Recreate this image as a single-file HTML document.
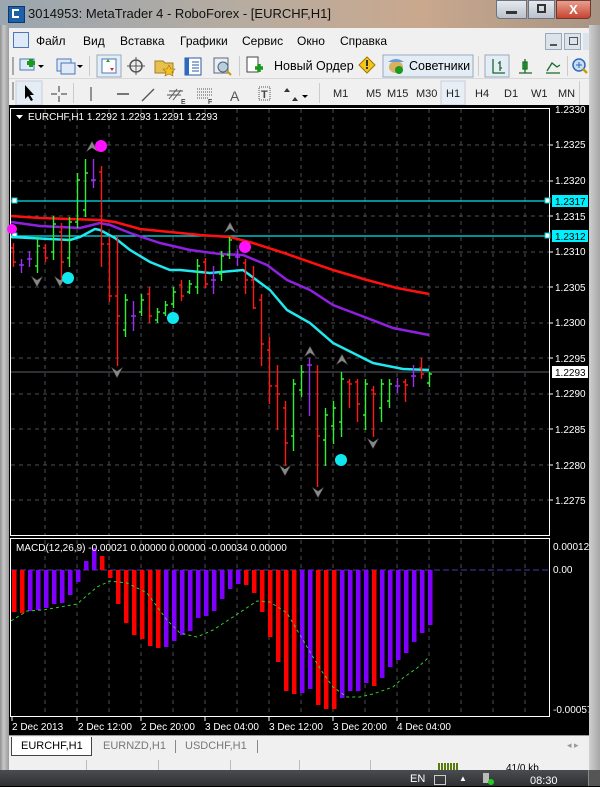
<!DOCTYPE html>
<html><head><meta charset="utf-8"><style>
*{margin:0;padding:0}
body{width:600px;height:786px;overflow:hidden;background:#000;font-family:"Liberation Sans","DejaVu Sans",sans-serif;position:relative}
.a{position:absolute}
.t{font-size:12px;color:#000;white-space:nowrap}
</style></head><body>
<!-- title bar -->
<div class="a" style="left:0;top:0;width:600px;height:28px;background:linear-gradient(90deg,#9aa6b0 0%,#b6aca0 40%,#c9a88e 70%,#a89484 100%)"></div>
<div class="a" style="left:8px;top:6px;width:15px;height:15px;background:#1d5fa8;border:1px solid #0c3a70"></div>
<div class="a" style="left:12px;top:9px;width:7px;height:9px;border:2px solid #fff;border-right:none;box-sizing:border-box"></div>
<div class="a t" style="left:28px;top:6px;font-size:13px;color:#111">3014953: MetaTrader 4 - RoboForex - [EURCHF,H1]</div>
<div class="a" style="left:496px;top:0;width:31px;height:19px;background:linear-gradient(#e6e9ee,#b9c1cc);border:1px solid #6b7380;border-radius:0 0 0 4px;box-sizing:border-box"></div>
<div class="a" style="left:506px;top:11px;width:11px;height:3px;background:#333"></div>
<div class="a" style="left:528px;top:0;width:27px;height:19px;background:linear-gradient(#e6e9ee,#b9c1cc);border:1px solid #6b7380;box-sizing:border-box"></div>
<div class="a" style="left:537px;top:4px;width:9px;height:9px;border:2px solid #333;box-sizing:border-box"></div>
<div class="a" style="left:556px;top:0;width:35px;height:19px;background:linear-gradient(#e8a090,#c74430);border:1px solid #6b3a30;border-radius:0 0 4px 0;color:#fff;font-size:13px;font-weight:bold;text-align:center;line-height:17px;box-sizing:border-box">X</div>
<!-- frame -->
<div class="a" style="left:0;top:25px;width:9px;height:745px;background:linear-gradient(90deg,#8f8f8f,#c8c8c8 40%,#9a9a9a)"></div>
<div class="a" style="left:589px;top:25px;width:11px;height:745px;background:linear-gradient(90deg,#d0d0d0,#a6a6a6)"></div>
<!-- menu -->
<div class="a" style="left:9px;top:28px;width:580px;height:25px;background:#f0f0f0"></div>
<div class="a" style="left:13px;top:32px;width:14px;height:14px;border:1px solid #4a78b8;background:#dfe9f7"></div>
<div class="a t" style="left:36px;top:34px">Файл</div>
<div class="a t" style="left:83px;top:34px">Вид</div>
<div class="a t" style="left:120px;top:34px">Вставка</div>
<div class="a t" style="left:180px;top:34px">Графики</div>
<div class="a t" style="left:242px;top:34px">Сервис</div>
<div class="a t" style="left:297px;top:34px">Окно</div>
<div class="a t" style="left:340px;top:34px">Справка</div>
<div class="a" style="left:545px;top:33px;width:17px;height:17px;background:#dde3ea;border:1px solid #9ab;box-sizing:border-box"></div>
<div class="a" style="left:550px;top:44px;width:7px;height:2px;background:#555"></div>
<div class="a" style="left:564px;top:33px;width:17px;height:17px;background:#dde3ea;border:1px solid #9ab;box-sizing:border-box"></div>
<div class="a" style="left:569px;top:37px;width:7px;height:6px;border:1px solid #555"></div>
<div class="a" style="left:583px;top:33px;width:6px;height:17px;background:#dde3ea"></div>
<!-- toolbars -->
<div class="a" style="left:9px;top:53px;width:580px;height:52px;background:#f0f0f0"></div>
<div class="a" style="left:9px;top:78px;width:580px;height:1px;background:#d8d8d8"></div>
<svg class="a" style="left:9px;top:53px" width="580" height="54">
<g fill="#aaa"><rect x="3" y="4" width="2" height="18"/><rect x="3" y="29" width="2" height="18"/></g>
<rect x="11" y="6" width="14" height="11" fill="#dfe9f7" stroke="#4a78b8"/><path d="M18 10h8M22 6v8" stroke="#1a9a1a" stroke-width="4"/><path d="M29 12l3 3 3-3z" fill="#000"/>
<rect x="48" y="6" width="14" height="12" fill="#dfe9f7" stroke="#4a78b8"/><rect x="52" y="10" width="14" height="11" fill="#dfe9f7" stroke="#4a78b8"/><path d="M68 12l3 3 3-3z" fill="#000"/>
<rect x="80" y="3" width="1" height="20" fill="#ccc"/>
<rect x="88" y="2" width="24" height="22" fill="#e4ecf5" stroke="#9ab"/><rect x="93" y="6" width="14" height="14" fill="#fff" stroke="#4a78b8"/><path d="M97 9l2-3 2 3z" fill="#2a2"/><path d="M101 15l2 3 2-3z" fill="#d22"/>
<circle cx="127" cy="13" r="6" fill="none" stroke="#555" stroke-width="1.5"/><path d="M127 4v18M118 13h18" stroke="#555"/>
<path d="M146 8h8l2 2h8v10h-18z" fill="#e8c050" stroke="#a08020"/><path d="M160 12l2 4 4 0-3 3 1 4-4-2-4 2 1-4-3-3 4 0z" fill="#f2c020" stroke="#a07010" stroke-width=".6"/>
<rect x="176" y="5" width="16" height="17" fill="#fff" stroke="#2a5aa0"/><rect x="176" y="5" width="4" height="17" fill="#2a6ac0"/><path d="M183 9h7M183 12h7M183 15h7M183 18h7" stroke="#2a5aa0"/>
<rect x="205" y="5" width="14" height="15" fill="#e8eef5" stroke="#667"/><circle cx="214" cy="14" r="5" fill="#bcd" stroke="#467"/><path d="M218 18l4 4" stroke="#c90" stroke-width="2"/>
<rect x="230" y="3" width="1" height="20" fill="#ccc"/>
<rect x="238" y="4" width="11" height="15" fill="#fff" stroke="#444"/><path d="M246 15h8M250 11v8" stroke="#1a9a1a" stroke-width="3.5"/>
<text x="265" y="17" font-size="12.5" font-family="Liberation Sans,sans-serif">Новый Ордер</text>
<path d="M358 4l8 8-8 8-8-8z" fill="#f5c518" stroke="#a07800"/><rect x="357" y="7" width="2" height="6" fill="#333"/><rect x="357" y="14" width="2" height="2" fill="#333"/>
<rect x="374" y="2" width="90" height="22" fill="#e4ecf5" stroke="#9ab"/>
<ellipse cx="387" cy="14" rx="7" ry="6" fill="#d9b060"/><path d="M379 9q8-6 16 0" fill="#6a9ad8"/><circle cx="390" cy="17" r="4" fill="#1a9a1a"/>
<text x="400" y="17" font-size="12.5" font-family="Liberation Sans,sans-serif">Советники</text>
<rect x="469" y="3" width="1" height="20" fill="#ccc"/>
<rect x="476" y="2" width="24" height="22" fill="#e4ecf5" stroke="#9ab"/><path d="M484 6v14h12M491 8v10M489 10h2M491 15h2" stroke="#1a6a2a" stroke-width="1.3" fill="none"/>
<path d="M516 6v14M514 9h4v7h-4zM510 20h13" stroke="#1a6a2a" stroke-width="1.3" fill="#2c2"/>
<path d="M537 20h14M538 18l5-8 5 4 3-2" stroke="#1a6a2a" stroke-width="1.3" fill="none"/>
<rect x="558" y="3" width="1" height="20" fill="#ccc"/>
<circle cx="570" cy="12" r="6" fill="#cde" stroke="#2a6ac0" stroke-width="1.5"/><path d="M567 12h6M570 9v6" stroke="#2a6ac0"/><path d="M574 16l4 4" stroke="#c90" stroke-width="2.5"/>
<!-- row 2 -->
<rect x="7" y="28" width="26" height="24" fill="#e4ecf5" stroke="#ccd"/><path d="M16 32v14l3-3 3 5 2-1-3-5h4z" fill="#000"/>
<path d="M50 33v6M50 43v6M42 41h6M52 41h6" stroke="#333"/>
<rect x="64" y="30" width="1" height="20" fill="#ccc"/>
<path d="M82 34v14" stroke="#333"/><path d="M108 41h12" stroke="#333" stroke-width="1.3"/><path d="M133 48l12-12" stroke="#555" stroke-width="1.3"/>
<path d="M160 46l8-10M164 47l8-10M158 42h14M160 38h14" stroke="#555"/><text x="172" y="51" font-size="7">E</text>
<path d="M188 36h16M188 39h16M188 42h16M188 45h12" stroke="#555" stroke-dasharray="1 1"/><text x="199" y="51" font-size="7">F</text>
<text x="221" y="48" font-size="14" fill="#555" font-family="Liberation Sans,sans-serif">A</text>
<rect x="250" y="34" width="11" height="13" fill="none" stroke="#555" stroke-dasharray="1 1"/><text x="252" y="45" font-size="11" font-weight="bold" fill="#444">T</text>
<path d="M278 35l3 4h-6zM286 44l3 4-3 0-3 0z" fill="#333"/><path d="M293 42l3 3 3-3z" fill="#000"/>
<rect x="310" y="30" width="1" height="20" fill="#ccc"/>
<g font-size="11" fill="#222" font-family="Liberation Sans,sans-serif"><text x="324" y="44">M1</text><text x="357" y="44">M5</text><text x="378" y="44">M15</text><text x="407" y="44">M30</text>
<rect x="432" y="28" width="24" height="24" fill="#e8eef5" stroke="#ccd"/><text x="437" y="44">H1</text><text x="466" y="44">H4</text><text x="495" y="44">D1</text><text x="522" y="44">W1</text><text x="549" y="44">MN</text></g>
<rect x="570" y="28" width="1" height="24" fill="#ccc"/>
</svg>
<!-- chart svg -->
<svg class="a" style="left:0;top:105px" width="589" height="630" viewBox="0 105 589 630">
<rect x="9" y="105" width="580" height="630" fill="#000"/>
<g stroke="#4a4e55" stroke-dasharray="4 4" stroke-width="1">
<path d="M45 109V535M77 109V535M109 109V535M141 109V535M173 109V535M205 109V535M237 109V535M269 109V535M301 109V535M333 109V535M365 109V535M397 109V535M429 109V535M461 109V535M493 109V535M525 109V535"/>
<path d="M45 540V716M77 540V716M109 540V716M141 540V716M173 540V716M205 540V716M237 540V716M269 540V716M301 540V716M333 540V716M365 540V716M397 540V716M429 540V716M461 540V716M493 540V716M525 540V716"/>
<path d="M11 145H549M11 181H549M11 216H549M11 252H549M11 287H549M11 323H549M11 358H549M11 394H549M11 429H549M11 465H549M11 500H549"/>
</g>
<rect x="10.5" y="108.5" width="539" height="427" fill="none" stroke="#fff"/>
<rect x="10.5" y="538.5" width="539" height="178" fill="none" stroke="#fff"/>
<path d="M11 372H549" stroke="#5a5e66"/>
<path d="M11 201H549M11 236H549" stroke="#00e5f0" stroke-width="1.3"/>
<rect x="12" y="198" width="5" height="5" fill="#fff" stroke="#0cc"/><rect x="12" y="233" width="5" height="5" fill="#fff" stroke="#0cc"/>
<rect x="545" y="198" width="5" height="5" fill="#fff" stroke="#0cc"/><rect x="545" y="233" width="5" height="5" fill="#fff" stroke="#0cc"/>
<polyline fill="none" stroke="#ff1010" stroke-width="2.5" points="11,216 40,218 100,220 115,222 140,229 170,232 200,235 230,237 253,243 287,254 333,270 367,280 397,288 429,294"/>
<polyline fill="none" stroke="#9020e0" stroke-width="2.5" points="11,222 40,226 80,228 100,223 110,225 130,233 160,243 190,250 220,254 243,255 267,265 287,280 310,290 333,305 367,318 393,328 429,335"/>
<polyline fill="none" stroke="#20e8f0" stroke-width="2.5" points="11,237 30,238 70,240 80,237 95,229 100,230 115,238 130,250 150,262 170,270 180,270 210,273 243,270 270,290 287,310 310,323 333,343 353,353 373,363 403,369 429,370"/>
<path fill="none" stroke="#30f030" stroke-width="1.4" d="M37.5 237V273M35 266H37.5M37.5 246H40M53.5 216V260M51 252H53.5M53.5 224H56M69.5 217V267M67 258H69.5M69.5 222H72M77.5 173V228M75 222H77.5M77.5 180H80M85.5 159V217M83 210H85.5M85.5 173H88M125.5 294V337M123 330H125.5M125.5 300H128M141.5 294V316M139 312H141.5M141.5 300H144M157.5 308V323M155 320H157.5M157.5 312H160M165.5 301V316M163 313H165.5M165.5 305H168M173.5 287V308M171 304H173.5M173.5 292H176M189.5 280V294M187 292H189.5M189.5 284H192M197.5 259V294M195 287H197.5M197.5 266H200M221.5 251V281M219 274H221.5M221.5 256H224M229.5 237V259M227 255H229.5M229.5 240H232M293.5 379V451M291 436H293.5M293.5 384H296M301.5 365V397M299 390H301.5M301.5 372H304M325.5 408V466M323 440H325.5M325.5 415H328M333.5 401V444M331 426H333.5M333.5 408H336M341.5 372V437M339 422H341.5M341.5 379H344M365.5 379V430M363 415H365.5M365.5 384H368M381.5 379V422M379 408H381.5M381.5 384H384M389.5 379V408M387 401H389.5M389.5 384H392M429.5 372V387M427 383H429.5M429.5 374H432"/>
<path fill="none" stroke="#ff1818" stroke-width="1.4" d="M13.5 243V267M11 248H13.5M13.5 262H16M45.5 244V262M43 248H45.5M45.5 258H48M61.5 223V283M59 232H61.5M61.5 262H64M101.5 166V267M99 172H101.5M101.5 244H104M109.5 237V302M107 244H109.5M109.5 296H112M117.5 237V366M115 296H117.5M117.5 316H120M149.5 287V323M147 294H149.5M149.5 316H152M181.5 280V301M179 285H181.5M181.5 296H184M205.5 258V288M203 262H205.5M205.5 284H208M245.5 259V294M243 263H245.5M245.5 280H248M253.5 266V309M251 280H253.5M253.5 308H256M261.5 294V366M259 300H261.5M261.5 344H264M269.5 337V404M267 350H269.5M269.5 386H272M277.5 365V430M275 386H277.5M277.5 394H280M285.5 401V466M283 408H285.5M285.5 443H288M317.5 365V487M315 372H317.5M317.5 436H320M349.5 379V408M347 382H349.5M349.5 384H352M357.5 379V422M355 382H357.5M357.5 404H360M373.5 386V437M371 390H373.5M373.5 394H376M405.5 379V402M403 382H405.5M405.5 385H408M421.5 358V379M419 368H421.5M421.5 374H424"/>
<path fill="none" stroke="#9a30f0" stroke-width="1.4" d="M21.5 259V273M19 265H24M29.5 251V267M27 259H32M93.5 159V188M91 180H96M133.5 301V331M131 316H136M213.5 266V294M211 280H216M237.5 249V266M235 257H240M309.5 358V416M307 365H312M397.5 378V393M395 386H400M413.5 365V387M411 376H416"/>
<g fill="#888" stroke="#222" stroke-width=".6">
<path d="M92 141l-6 11 6-4 6 4z"/><path d="M230 222l-6 11 6-4 6 4z"/><path d="M310 346l-6 11 6-4 6 4z"/><path d="M342 354l-6 11 6-4 6 4z"/>
<path d="M37 287l-6-11 6 4 6-4z"/><path d="M60 287l-6-11 6 4 6-4z"/><path d="M117 378l-6-11 6 4 6-4z"/><path d="M285 476l-6-11 6 4 6-4z"/><path d="M318 498l-6-11 6 4 6-4z"/><path d="M373 449l-6-11 6 4 6-4z"/>
</g>
<circle cx="101" cy="146" r="6" fill="#ff10ff"/><circle cx="245" cy="247" r="6" fill="#ff10ff"/><circle cx="12" cy="229" r="5" fill="#ff10ff"/>
<circle cx="68" cy="278" r="6" fill="#10e8f0"/><circle cx="173" cy="318" r="6" fill="#10e8f0"/><circle cx="341" cy="460" r="6" fill="#10e8f0"/>
<path d="M16 115h7l-3.5 4z" fill="#fff"/>
<text x="28" y="120" font-size="10" fill="#fff" font-family="Liberation Sans,sans-serif">EURCHF,H1  1.2292 1.2293 1.2291 1.2293</text>
<g font-size="10" fill="#fff" font-family="Liberation Sans,sans-serif">
<text x="555" y="113">1.2330</text><text x="555" y="148">1.2325</text><text x="555" y="184">1.2320</text><text x="555" y="220">1.2315</text><text x="555" y="255">1.2310</text><text x="555" y="291">1.2305</text><text x="555" y="326">1.2300</text><text x="555" y="362">1.2295</text><text x="555" y="397">1.2290</text><text x="555" y="433">1.2285</text><text x="555" y="469">1.2280</text><text x="555" y="504">1.2275</text>
<text x="553" y="550">0.00012</text><text x="553" y="573">0.00</text><text x="553" y="713">-0.00057</text>
</g>
<path d="M550 145h3M550 181h3M550 216h3M550 252h3M550 287h3M550 323h3M550 358h3M550 394h3M550 429h3M550 465h3M550 500h3" stroke="#fff"/>
<rect x="552" y="195" width="36" height="12" fill="#00f0ff"/><text x="555" y="205" font-size="10" fill="#000">1.2317</text>
<rect x="552" y="230" width="36" height="12" fill="#00f0ff"/><text x="555" y="240" font-size="10" fill="#000">1.2312</text>
<rect x="552" y="366" width="36" height="12" fill="#fff"/><text x="555" y="376" font-size="10" fill="#000">1.2293</text>
<path d="M11 570H549" stroke="#4a36b0" stroke-dasharray="6 3"/>
<g fill="#ff0000"><rect x="12" y="570" width="4.5" height="42"/><rect x="20" y="570" width="4.5" height="43"/><rect x="100" y="556" width="4.5" height="14"/><rect x="108" y="570" width="4.5" height="8"/><rect x="116" y="570" width="4.5" height="34"/><rect x="124" y="570" width="4.5" height="53"/><rect x="132" y="570" width="4.5" height="65"/><rect x="140" y="570" width="4.5" height="69"/><rect x="148" y="570" width="4.5" height="76"/><rect x="156" y="570" width="4.5" height="78"/><rect x="244" y="570" width="4.5" height="15"/><rect x="252" y="570" width="4.5" height="23"/><rect x="260" y="570" width="4.5" height="42"/><rect x="268" y="570" width="4.5" height="67"/><rect x="276" y="570" width="4.5" height="92"/><rect x="284" y="570" width="4.5" height="121"/><rect x="292" y="570" width="4.5" height="124"/><rect x="316" y="570" width="4.5" height="135"/><rect x="324" y="570" width="4.5" height="139"/><rect x="332" y="570" width="4.5" height="139"/><rect x="372" y="570" width="4.5" height="116"/></g>
<g fill="#8000ff"><rect x="28" y="570" width="4.5" height="41"/><rect x="36" y="570" width="4.5" height="40"/><rect x="44" y="570" width="4.5" height="38"/><rect x="52" y="570" width="4.5" height="34"/><rect x="60" y="570" width="4.5" height="33"/><rect x="68" y="570" width="4.5" height="25"/><rect x="76" y="570" width="4.5" height="12"/><rect x="84" y="561" width="4.5" height="9"/><rect x="92" y="548" width="4.5" height="22"/><rect x="164" y="570" width="4.5" height="77"/><rect x="172" y="570" width="4.5" height="71"/><rect x="180" y="570" width="4.5" height="65"/><rect x="188" y="570" width="4.5" height="61"/><rect x="196" y="570" width="4.5" height="48"/><rect x="204" y="570" width="4.5" height="46"/><rect x="212" y="570" width="4.5" height="41"/><rect x="220" y="570" width="4.5" height="29"/><rect x="228" y="570" width="4.5" height="19"/><rect x="236" y="570" width="4.5" height="14"/><rect x="300" y="570" width="4.5" height="123"/><rect x="308" y="570" width="4.5" height="119"/><rect x="340" y="570" width="4.5" height="128"/><rect x="348" y="570" width="4.5" height="121"/><rect x="356" y="570" width="4.5" height="121"/><rect x="364" y="570" width="4.5" height="113"/><rect x="380" y="570" width="4.5" height="108"/><rect x="388" y="570" width="4.5" height="97"/><rect x="396" y="570" width="4.5" height="90"/><rect x="404" y="570" width="4.5" height="83"/><rect x="412" y="570" width="4.5" height="72"/><rect x="420" y="570" width="4.5" height="63"/><rect x="428" y="570" width="4.5" height="55"/></g>
<polyline fill="none" stroke="#30d030" stroke-dasharray="3 3" points="11,621 27,611 43,610 77,604 97,587 110,581 127,583 147,593 167,620 180,633 197,637 213,630 233,617 257,601 270,602 287,613 300,635 313,657 323,673 333,687 347,697 360,697 373,694 393,687 403,678 417,668 428,658"/>
<text x="16" y="551" font-size="10" fill="#fff" font-family="Liberation Sans,sans-serif">MACD(12,26,9) -0.00021 0.00000 0.00000 -0.00034 0.00000</text>
<path d="M12 717v4M77 717v4M141 717v4M205 717v4M269 717v4M333 717v4M397 717v4" stroke="#fff"/>
<g font-size="10" fill="#fff" font-family="Liberation Sans,sans-serif"><text x="12" y="730">2 Dec 2013</text><text x="78" y="730">2 Dec 12:00</text><text x="141" y="730">2 Dec 20:00</text><text x="205" y="730">3 Dec 04:00</text><text x="269" y="730">3 Dec 12:00</text><text x="333" y="730">3 Dec 20:00</text><text x="397" y="730">4 Dec 04:00</text></g>
</svg>
<!-- tabs -->
<div class="a" style="left:9px;top:735px;width:580px;height:21px;background:#f0f0f0;border-top:1px solid #999"></div>
<div class="a" style="left:11px;top:737px;width:81px;height:19px;background:#fff;border:1px solid #444;border-top:none;box-sizing:border-box"></div>
<div class="a t" style="left:21px;top:740px;font-size:11px">EURCHF,H1</div>
<div class="a t" style="left:103px;top:740px;font-size:11px;color:#777">EURNZD,H1</div>
<div class="a" style="left:175px;top:740px;width:1px;height:13px;background:#888"></div>
<div class="a t" style="left:185px;top:740px;font-size:11px;color:#777">USDCHF,H1</div>
<div class="a" style="left:257px;top:740px;width:1px;height:13px;background:#888"></div>
<div class="a t" style="left:567px;top:740px;font-size:9px;color:#999">◂ ▸</div>
<!-- status -->
<div class="a" style="left:9px;top:756px;width:580px;height:14px;background:#f0f0f0"></div>
<div class="a" style="left:86px;top:760px;width:1px;height:10px;background:#bbb"></div><div class="a" style="left:158px;top:760px;width:1px;height:10px;background:#bbb"></div><div class="a" style="left:230px;top:760px;width:1px;height:10px;background:#bbb"></div><div class="a" style="left:299px;top:760px;width:1px;height:10px;background:#bbb"></div><div class="a" style="left:370px;top:760px;width:1px;height:10px;background:#bbb"></div>
<div class="a" style="left:438px;top:763px;width:20px;height:7px;background:repeating-linear-gradient(90deg,#5a7a10 0 2px,#f0f0f0 2px 3px)"></div>
<div class="a t" style="left:506px;top:763px;font-size:10px">41/0 kb</div>
<!-- taskbar -->
<div class="a" style="left:0;top:770px;width:600px;height:16px;background:linear-gradient(#4a4c50,#2e3034)"></div>
<div class="a t" style="left:410px;top:773px;font-size:11px;color:#fff">EN</div>
<div class="a" style="left:434px;top:775px;width:10px;height:8px;border:1px solid #ccc"></div>
<div class="a t" style="left:459px;top:774px;font-size:8px;color:#fff">▲</div>
<div class="a" style="left:483px;top:773px;width:6px;height:10px;background:#bbb"></div><div class="a" style="left:488px;top:779px;width:6px;height:6px;background:#2c2;border-radius:3px"></div>
<div class="a t" style="left:530px;top:775px;font-size:11px;color:#fff">08:30</div>
<div class="a" style="left:588px;top:770px;width:12px;height:16px;background:#555;border-left:1px solid #888"></div>
</body></html>
